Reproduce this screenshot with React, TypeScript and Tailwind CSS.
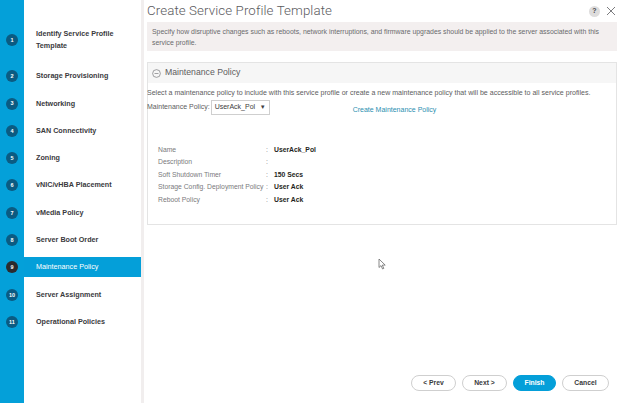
import React from 'react';

const steps = [
  'Identify Service Profile Template',
  'Storage Provisioning',
  'Networking',
  'SAN Connectivity',
  'Zoning',
  'vNIC/vHBA Placement',
  'vMedia Policy',
  'Server Boot Order',
  'Maintenance Policy',
  'Server Assignment',
  'Operational Policies',
];

const details = [
  { label: 'Name', value: 'UserAck_Pol' },
  { label: 'Description', value: '' },
  { label: 'Soft Shutdown Timer', value: '150 Secs' },
  { label: 'Storage Config. Deployment Policy', value: 'User Ack' },
  { label: 'Reboot Policy', value: 'User Ack' },
];

const font = { fontFamily: '"Liberation Sans", Arial, sans-serif' };

const Sidebar: React.FC = () => (
  <div className="w-[144px] h-full shrink-0 flex flex-col gap-[7.3px] pt-[21px] bg-[linear-gradient(to_right,#04a0d9_24px,#ffffff_24px)] border-r-[3px] border-[#f1eeee]">
    {steps.map((s, i) => {
      const active = i === 8;
      return (
        <div
          key={s}
          className={`flex items-center ${i === 0 ? 'h-[38px]' : 'h-[20px]'}`}
        >
          <div className="w-[24px] flex justify-center">
            <div
              className={`w-[12px] h-[12px] rounded-full flex items-center justify-center text-[5.5px] font-bold text-white ${
                active ? 'bg-[#2b2b2e]' : 'bg-[#0b5b82]'
              }`}
            >
              {i + 1}
            </div>
          </div>
          <div
            className={`flex-1 h-full flex items-center pl-[12px] pr-2 text-[7.2px] leading-[12px] ${
              active ? 'bg-[#049fd9] text-white' : 'text-[#3a3a3d] font-bold'
            }`}
          >
            {s === 'Identify Service Profile Template' ? (
              <span>
                Identify Service Profile
                <br />
                Template
              </span>
            ) : (
              s
            )}
          </div>
        </div>
      );
    })}
  </div>
);

const Btn: React.FC<{ label: string; primary?: boolean; w: string }> = ({ label, primary, w }) => (
  <button
    className={`${w} h-[16px] rounded-full text-[6.8px] font-bold flex items-center justify-center ${
      primary ? 'bg-[#049fd9] text-white border border-[#049fd9]' : 'bg-white text-[#39393b] border border-[#cfcfcf]'
    }`}
  >
    {label}
  </button>
);

export default function App() {
  return (
    <div className="relative w-[624px] h-[403px] flex bg-white overflow-hidden" style={font}>
      <Sidebar />

      <div className="flex-1 flex flex-col pl-[3px] pr-[7px]">
        {/* Header */}
        <div className="h-[22px] flex items-center justify-between">
          <h1 className="text-[13.3px] text-[#5b5b5e] font-normal tracking-[0.1px]" style={{ fontFamily: 'Roboto, "Liberation Sans", sans-serif', fontWeight: 300 }}>
            Create Service Profile Template
          </h1>
          <div className="flex items-center gap-[6px] pr-[1px]">
            <div className="w-[11px] h-[11px] rounded-full bg-[#dedddd] flex items-center justify-center text-[7px] font-bold text-[#4b4b4b]">
              ?
            </div>
            <svg width="10" height="10" viewBox="0 0 10 10">
              <path d="M1 1 L9 9 M9 1 L1 9" stroke="#6d6d70" strokeWidth="0.9" />
            </svg>
          </div>
        </div>

        {/* Info box */}
        <div className="h-[29px] bg-[#f3efef] pl-[5px] pr-[4px] pt-[4px] text-[6.9px] leading-[11px] text-[#6a6a6d]">
          Specify how disruptive changes such as reboots, network interruptions, and firmware upgrades should be applied to the server associated with this service profile.
        </div>

        {/* Panel */}
        <div className="mt-[11px] h-[163px] border border-[#e4e4e4] flex flex-col">
          <div className="h-[20px] bg-[#f6f6f6] flex items-center gap-[4px] px-[4px] text-[8.7px] text-[#5d5d60]">
            <svg width="9" height="9" viewBox="0 0 10 10">
              <circle cx="5" cy="5" r="4.3" fill="none" stroke="#6d6d70" strokeWidth="0.7" />
              <path d="M2.8 5 H7.2" stroke="#6d6d70" strokeWidth="0.7" />
            </svg>
            Maintenance Policy
          </div>
          <div className="text-[7.05px] text-[#5d5d60] pt-[5px] -ml-[1px]">
            Select a maintenance policy to include with this service profile or create a new maintenance policy that will be accessible to all service profiles.
          </div>
          <div className="flex items-center mt-[1px] -ml-[1px] text-[7px] text-[#5d5d60]">
            <span>Maintenance Policy:</span>
            <div className="ml-[1px] w-[59px] h-[15px] border border-[#cfcfcf] flex items-center justify-between px-[3px] text-[#3d3d40]">
              <span>UserAck_Pol</span>
              <span className="text-[6px]">▼</span>
            </div>
            <span className="ml-[83px] mt-[5px] text-[#2b8fb0]">Create Maintenance Policy</span>
          </div>

          <div className="mt-[30px] pl-[10px] flex flex-col gap-[2.5px] text-[6.8px]">
            {details.map(d => (
              <div key={d.label} className="flex items-center h-[10px]">
                <span className="w-[108px] text-[#7a7a7d]">{d.label}</span>
                <span className="w-[8px] text-[#7a7a7d]">:</span>
                <span className="font-bold text-[#1f1f22]">{d.value}</span>
              </div>
            ))}
          </div>
        </div>

        <div className="flex-1" />

        {/* Footer */}
        <div className="h-[28px] flex items-start justify-end gap-[6px] pr-[8px]">
          <Btn label="< Prev" w="w-[45px]" />
          <Btn label="Next >" w="w-[45px]" />
          <Btn label="Finish" primary w="w-[43px]" />
          <Btn label="Cancel" w="w-[47px]" />
        </div>
      </div>

      {/* mouse cursor */}
      <svg className="absolute left-[378px] top-[258px]" width="9" height="12" viewBox="0 0 9 12">
        <path d="M1 1 L1 9.5 L3 7.6 L4.6 11 L5.8 10.4 L4.3 7.1 L7.2 7.1 Z" fill="#fff" stroke="#6a6a6a" strokeWidth="0.8" />
      </svg>
    </div>
  );
}
